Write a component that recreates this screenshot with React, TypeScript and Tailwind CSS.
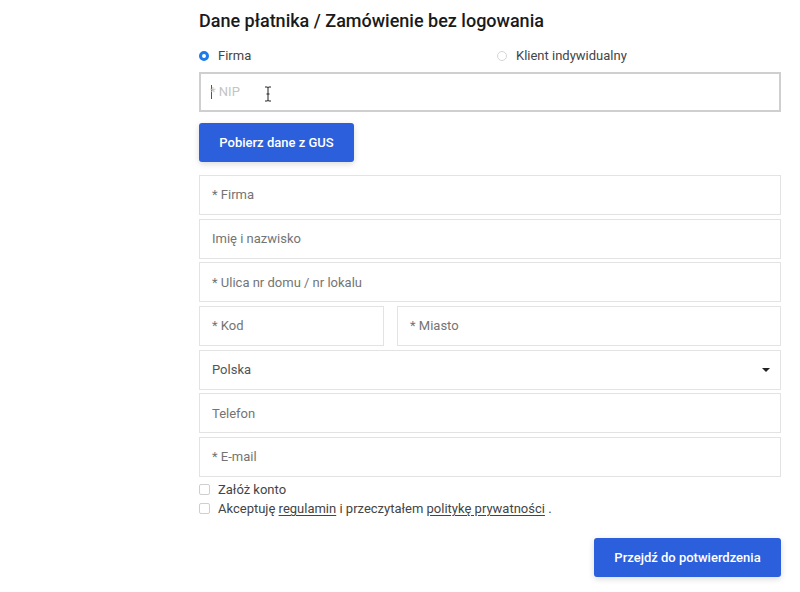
import React from "react";

function Field({ label, className = "" }: { label: string; className?: string }) {
  return (
    <div className={`h-10 border border-[#e3e3e3] flex items-center px-3 text-[13px] text-[#747474] ${className}`}>
      {label}
    </div>
  );
}

export default function App() {
  return (
    <div className="w-[800px] h-[592px] bg-white overflow-hidden" style={{ fontFamily: "Roboto, 'Noto Sans', sans-serif" }}>
      <div className="ml-[199px] w-[582px] pt-[10px]">
        <h1 className="text-[18px] font-medium text-[#1a1a1a] leading-[22px]">Dane płatnika / Zamówienie bez logowania</h1>
        <div className="grid grid-cols-2 gap-[14px] mt-[16px] text-[13px] text-[#444] leading-[16px]">
          <label className="flex items-center gap-[9px]">
            <span className="w-[10px] h-[10px] rounded-full border-[3px] border-[#1e7ae8] bg-white box-border" />
            Firma
          </label>
          <label className="flex items-center gap-[9px]">
            <span className="w-[10px] h-[10px] rounded-full border border-[#d6d6d6] bg-white box-border" />
            Klient indywidualny
          </label>
        </div>
        <div className="mt-[8px] h-10 border-2 border-[#cfcfcf] flex items-center px-[10px] text-[13px] text-[#c4c4c4] relative">
          <span className="w-px h-[14px] bg-[#555] mr-[-2px]" />
          <span>* NIP</span>
          <svg className="absolute left-[63px] top-[12px]" width="8" height="16" viewBox="0 0 8 16">
            <path d="M1 1 H3 Q4 1 4 2 V14 Q4 15 3 15 H1 M7 1 H5 Q4 1 4 2 M4 14 Q4 15 5 15 H7 M2.5 8 H5.5" stroke="#222" strokeWidth="1" fill="none" />
          </svg>
        </div>
        <button className="mt-[11px] h-[39px] w-[155px] rounded-[3px] bg-[#2c5fdb] text-white text-[13px] font-medium shadow-[0_2px_6px_rgba(0,0,0,0.15)]">
          Pobierz dane z GUS
        </button>
        <div className="mt-[13px] flex flex-col gap-[3.67px]">
          <Field label="* Firma" />
          <Field label="Imię i nazwisko" />
          <Field label="* Ulica nr domu / nr lokalu" />
          <div className="flex gap-[13px]">
            <Field label="* Kod" className="w-[185px]" />
            <Field label="* Miasto" className="flex-1" />
          </div>
          <div className="h-10 border border-[#e3e3e3] flex items-center justify-between pl-3 pr-[10px] text-[13px] text-[#555]">
            <span>Polska</span>
            <svg width="8" height="4" viewBox="0 0 8 4"><path d="M0 0 H8 L4 4 Z" fill="#222" /></svg>
          </div>
          <Field label="Telefon" />
          <Field label="* E-mail" />
        </div>
        <div className="mt-[5px] flex flex-col gap-[3px] text-[13px] text-[#444] leading-[16px]">
          <label className="flex items-center gap-[8px]">
            <span className="w-[11px] h-[11px] rounded-[2px] border border-[#cfcfcf]" />
            Załóż konto
          </label>
          <label className="flex items-center gap-[8px]">
            <span className="w-[11px] h-[11px] rounded-[2px] border border-[#cfcfcf]" />
            <span>
              Akceptuję <span className="underline underline-offset-2">regulamin</span> i przeczytałem{" "}
              <span className="underline underline-offset-2">politykę prywatności</span> .
            </span>
          </label>
        </div>
        <div className="flex justify-end mt-[21px]">
          <button className="h-[39px] w-[187px] rounded-[3px] bg-[#2c5fdb] text-white text-[13px] font-medium shadow-[0_2px_6px_rgba(0,0,0,0.15)]">
            Przejdź do potwierdzenia
          </button>
        </div>
      </div>
    </div>
  );
}
